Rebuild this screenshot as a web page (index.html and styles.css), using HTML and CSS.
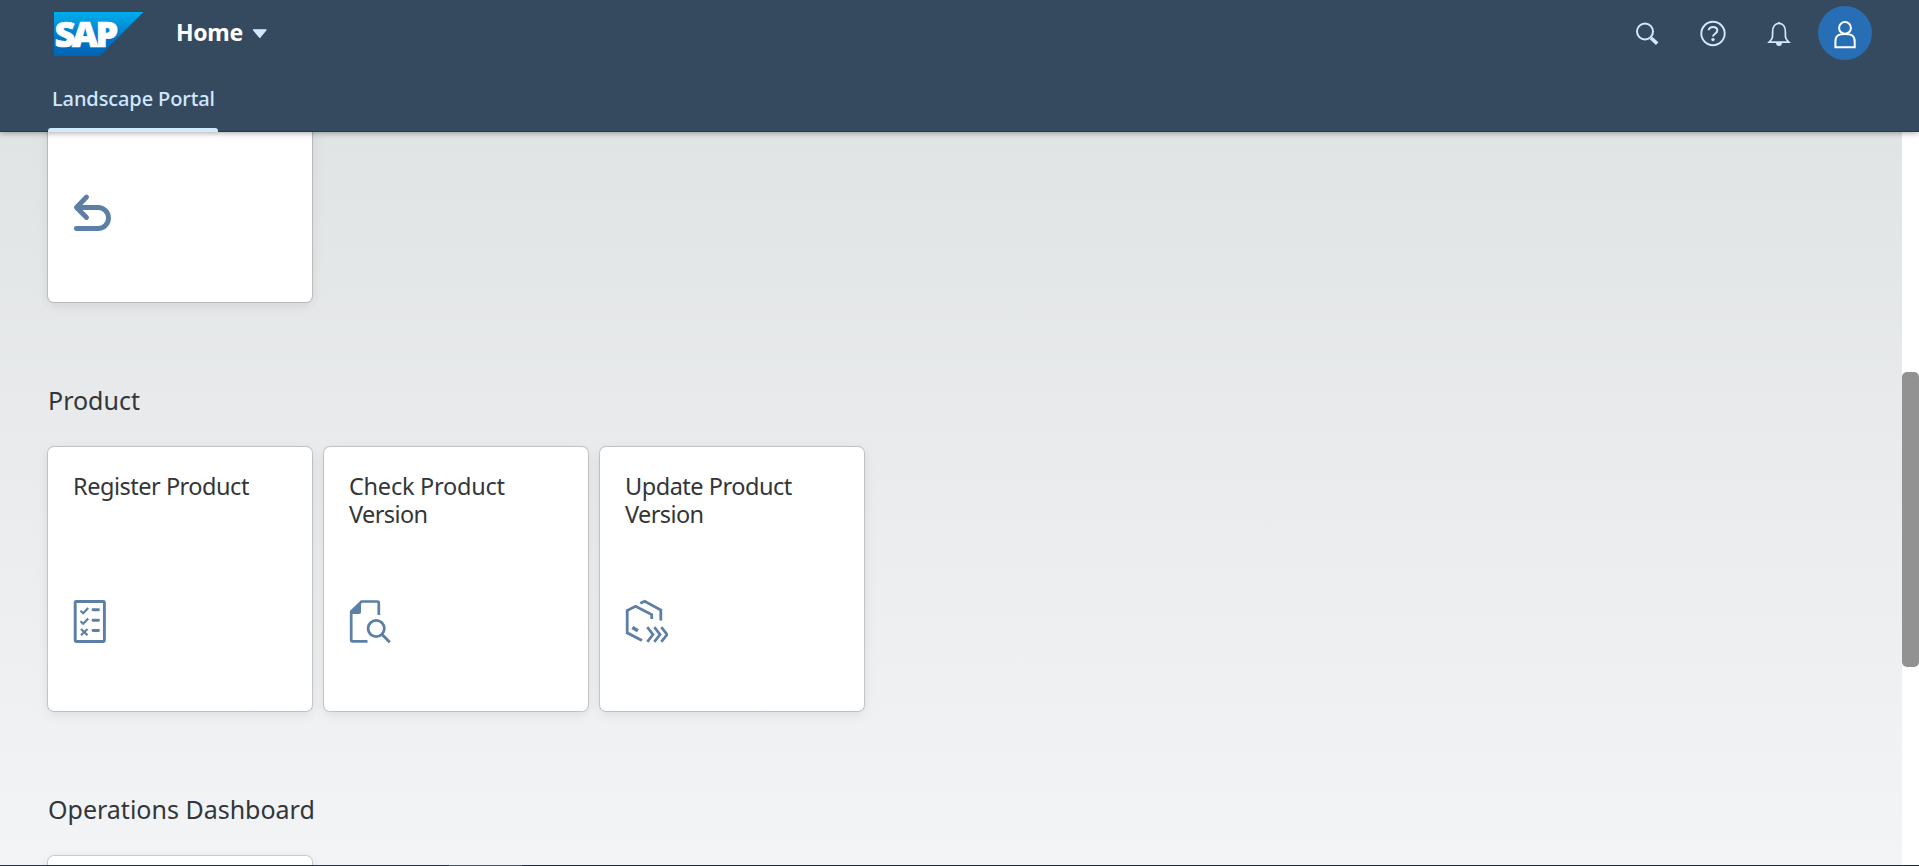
FILE: index.html
```html
<!DOCTYPE html>
<html lang="en">
<head>
<meta charset="utf-8">
<title>Home</title>
<link rel="stylesheet" href="styles.css">
</head>
<body>
<header class="shell">
  <div class="shell-bar">
    <svg class="logo" width="90" height="44" viewBox="0 0 90 44">
      <defs><linearGradient id="lg" x1="0" y1="0" x2="0" y2="1"><stop offset="0" stop-color="#00aeef"/><stop offset=".25" stop-color="#0098dc"/><stop offset=".6" stop-color="#0076cb"/><stop offset="1" stop-color="#0064b4"/></linearGradient></defs>
      <path d="M0 0H89.500L45.500 44H0Z" fill="url(#lg)"/>
      <text class="logo-text" y="34.500" x="0.500 18 41.500">SAP</text>
    </svg>
    <span class="title">Home</span>
    <svg class="caret" width="16" height="10" viewBox="0 0 16 10"><path d="M1.500 .8H14L7.800 8.400Z" fill="#d1e8ff" stroke="#d1e8ff" stroke-width="1.300" stroke-linejoin="round"/></svg>
    <div class="actions">
      <svg class="action" width="54" height="54" viewBox="0 0 54 54"><circle cx="25" cy="25.500" r="8" stroke-width="2"/><path d="M31 32l6.200 5.700" stroke-width="3.600"/></svg>
      <svg class="action" width="54" height="54" viewBox="0 0 54 54"><circle cx="27" cy="27.500" r="11.700" stroke-width="1.900"/><path d="M22.700 24.300c0-4.300 8.600-4.300 8.600.3 0 3.200-4.300 3-4.300 5.900" stroke-width="2"/><circle cx="27" cy="33.600" r="1.700" class="solid"/></svg>
      <svg class="action" width="54" height="54" viewBox="0 0 54 54"><path d="M17.200 36.100c3.800-3.600 3.400-5 3.400-10.200 0-5 2.300-8.500 6.400-8.500s6.400 3.500 6.400 8.500c0 5.200-.4 6.600 3.400 10.200Z" stroke-width="1.700"/><path d="M24 36.500a3 3.500 0 0 0 6 0ZM25.500 17l1.500-1.200 1.500 1.200Z" class="solid"/></svg>
      <span class="avatar"><svg width="54" height="54" viewBox="0 0 54 54"><circle cx="27" cy="21.900" r="5.900"/><path d="M17.400 41.300V35.500C17.400 29.500 20.500 28 27 28s9.700 1.500 9.700 7.500v5.800Z"/></svg></span>
    </div>
  </div>
  <nav class="tabs"><a class="tab">Landscape Portal</a></nav>
</header>
<div class="page">
  <main class="content">
    <div class="tiles first">
      <article class="tile">
        <svg class="icon" width="50" height="50" viewBox="0 0 50 50"><path d="M20.500 11L10.500 21.500l10 10M10.500 21.500H32a10.400 10.400 0 0 1 0 21H10.300" stroke-width="4.900" stroke-linecap="round" stroke-linejoin="round"/></svg>
      </article>
    </div>
    <h2>Product</h2>
    <div class="tiles">
      <article class="tile"><h3 class="register">Register Product</h3>
        <svg class="icon" width="50" height="50" viewBox="0 0 50 50"><rect x="9.200" y="6.500" width="29.200" height="40" rx="1" stroke-width="2.900"/><path d="M14.500 15.800l2.700 2.500 5-5.300M14.500 26.300l2.700 2.500 5-5.300M15 34l6.500 6.200M21.500 34L15 40.200" stroke-width="2.200"/><path d="M27 14.700h5.500M27 25.300h5.500M27 35.500h5.500" stroke-width="2.900" stroke-linecap="round"/></svg>
      </article>
      <article class="tile"><h3 class="check">Check Product<br><span class="line">Version</span></h3>
        <svg class="icon" width="50" height="50" viewBox="0 0 50 50"><path d="M25.500 46.400H10.500Q9.200 46.400 9.200 45V16.500L19.500 6.500H35.500Q36.800 6.500 36.800 8V20" stroke-width="2.700"/><path d="M8.500 16.500L19 6V17q0 2-2 2H9Z" class="fill"/><circle cx="34.200" cy="33.500" r="8.100" stroke-width="2.800"/><path d="M40 39.500l7.800 7.800" stroke-width="2.900"/></svg>
      </article>
      <article class="tile"><h3 class="update">Update Product<br><span class="line">Version</span></h3>
        <svg class="icon" width="50" height="50" viewBox="0 0 50 50"><path d="M24 45.500L9.200 37.800V15.500L17.500 11.200 33.700 19.500V24M22.300 8.200L26.700 6.200 42.800 15V25.500" stroke-width="2.800"/><path d="M14.300 32.500l5.600 3.200" stroke-width="3.600"/><path d="M29.300 32.200l5.700 7.300-5.700 7.300M36.300 32.200l5.700 7.300-5.700 7.300M43.300 32.200l5.700 7.300-5.700 7.300" stroke-width="2.700"/></svg>
      </article>
    </div>
    <h2>Operations Dashboard</h2>
    <div class="tiles"><article class="tile"></article></div>
  </main>
  <div class="scrollbar"><div class="thumb"></div></div>
</div>
<div class="edge"></div>
</body>
</html>
```
FILE: styles.css
```css
* { box-sizing: border-box; }
body {
  margin: 0;
  height: 866px;
  overflow: hidden;
  display: flex;
  flex-direction: column;
  font-family: "Noto Sans", "Open Sans", sans-serif;
  color: #32363a;
}
.shell {
  flex: none;
  height: 132px;
  background: #354a5f;
  box-shadow: 0 1px 6px rgba(0, 0, 0, .35), inset 0 -1px 0 #283848;
  position: relative;
  z-index: 1;
}
.shell-bar { display: flex; height: 66px; padding: 0 47px 0 54px; }
.logo { margin-top: 12px; }
.logo-text {
  font-family: "Open Sans", "Liberation Sans", sans-serif;
  font-weight: 800;
  font-size: 36px;
  fill: #fff;
  stroke: #fff;
  stroke-width: .7px;
}
.title {
  margin: 16px 0 0 32px;
  width: 68px;
  font-size: 23px;
  line-height: 33px;
  letter-spacing: -.3px;
  font-weight: 700;
  color: #fff;
  white-space: nowrap;
}
.caret { margin: 29px 0 0 8px; }
.actions { display: flex; gap: 12px; margin-left: auto; padding-top: 6px; }
.action { fill: none; stroke: #d1e8ff; }
.solid { fill: #d1e8ff; stroke: none; }
.avatar {
  width: 54px;
  height: 54px;
  border-radius: 50%;
  background: #286eb4;
}
.avatar svg { display: block; fill: none; stroke: #fff; stroke-width: 2px; }
.tabs { display: flex; padding-left: 48px; height: 66px; }
.tab {
  position: relative;
  width: 170px;
  padding-left: 4px;
  font-size: 20px;
  font-weight: 500;
  line-height: 66px;
  letter-spacing: -.1px;
  color: #d1e8ff;
  white-space: nowrap;
}
.tab::after {
  content: "";
  position: absolute;
  left: 0;
  right: 0;
  bottom: 0;
  height: 4px;
  border-radius: 3px 3px 0 0;
  background: #d1e8ff;
}
.page { flex: 1; min-height: 0; display: flex; }
.content {
  flex: 1;
  overflow: hidden;
  padding-left: 48px;
  background: linear-gradient(#e0e4e4, #e8eaeb 38%, #f3f4f6);
}
.tiles { display: flex; gap: 12px; }
.first { margin-top: -94px; }
.tile {
  flex: none;
  display: flex;
  flex-direction: column;
  justify-content: space-between;
  width: 264px;
  height: 264px;
  padding: 25px 17px 66px;
  border-radius: 6px;
  background: #fff;
  box-shadow: 0 0 0 1px rgba(0, 0, 0, .15), 0 3px 12px rgba(0, 0, 0, .09);
}
.icon { margin: auto 0 0 1px; fill: none; stroke: #5b7fa5; }
.fill { fill: #5b7fa5; stroke: none; }
h2 {
  margin: 82px 0 31px;
  font-size: 25px;
  line-height: 32px;
  font-weight: 400;
}
h3 {
  margin: 0 0 0 8px;
  font-size: 23.500px;
  line-height: 28px;
  font-weight: 400;
  white-space: nowrap;
}
.register { letter-spacing: -.48px; }
.check { letter-spacing: -.25px; }
.update { letter-spacing: -.48px; }
.line { letter-spacing: -.6px; }
.scrollbar { width: 17px; padding-top: 240px; background: #fff; }
.thumb { height: 295px; border-radius: 5px; background: #929292; }
.edge {
  flex: none;
  height: 1px;
  background: linear-gradient(90deg, #1f3440 449px, #4a5664 449px 522px, #1e2a3d 522px);
}
```
